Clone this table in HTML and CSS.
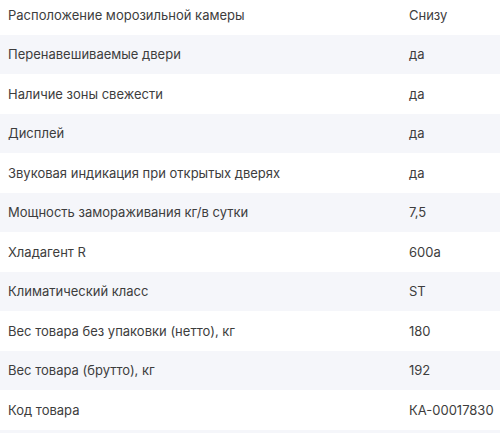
FILE: index.html
```html
<!DOCTYPE html>
<html lang="ru">
<head>
<meta charset="utf-8">
<link rel="stylesheet" href="styles.css">
</head>
<body>
<div class="specs">
  <div class="row"><span class="label">Расположение морозильной камеры</span><span class="value">Снизу</span></div>
  <div class="row"><span class="label">Перенавешиваемые двери</span><span class="value">да</span></div>
  <div class="row"><span class="label">Наличие зоны свежести</span><span class="value">да</span></div>
  <div class="row"><span class="label">Дисплей</span><span class="value">да</span></div>
  <div class="row"><span class="label">Звуковая индикация при открытых дверях</span><span class="value">да</span></div>
  <div class="row"><span class="label">Мощность замораживания кг/в сутки</span><span class="value">7,5</span></div>
  <div class="row"><span class="label">Хладагент R</span><span class="value">600a</span></div>
  <div class="row"><span class="label">Климатический класс</span><span class="value">ST</span></div>
  <div class="row"><span class="label">Вес товара без упаковки (нетто), кг</span><span class="value">180</span></div>
  <div class="row"><span class="label">Вес товара (брутто), кг</span><span class="value">192</span></div>
  <div class="row"><span class="label">Код товара</span><span class="value">КА-00017830</span></div>
  <div class="row"><span class="label"></span><span class="value"></span></div>
</div>
</body>
</html>
```
FILE: styles.css
```css
html, body {
  margin: 0;
  padding: 0;
  background: #ffffff;
  overflow: hidden;
}
body {
  font-family: Inter, "Noto Sans", sans-serif;
  font-size: 13px;
  color: #3d3d3d;
}
.specs {
  display: flex;
  flex-direction: column;
  margin-top: -5px;
}
.row {
  display: grid;
  grid-template-columns: 401px 1fr;
  align-items: center;
  height: 39.5px;
  padding-left: 8px;
}
.row:nth-child(even) {
  background: #f5f6fa;
}
```
